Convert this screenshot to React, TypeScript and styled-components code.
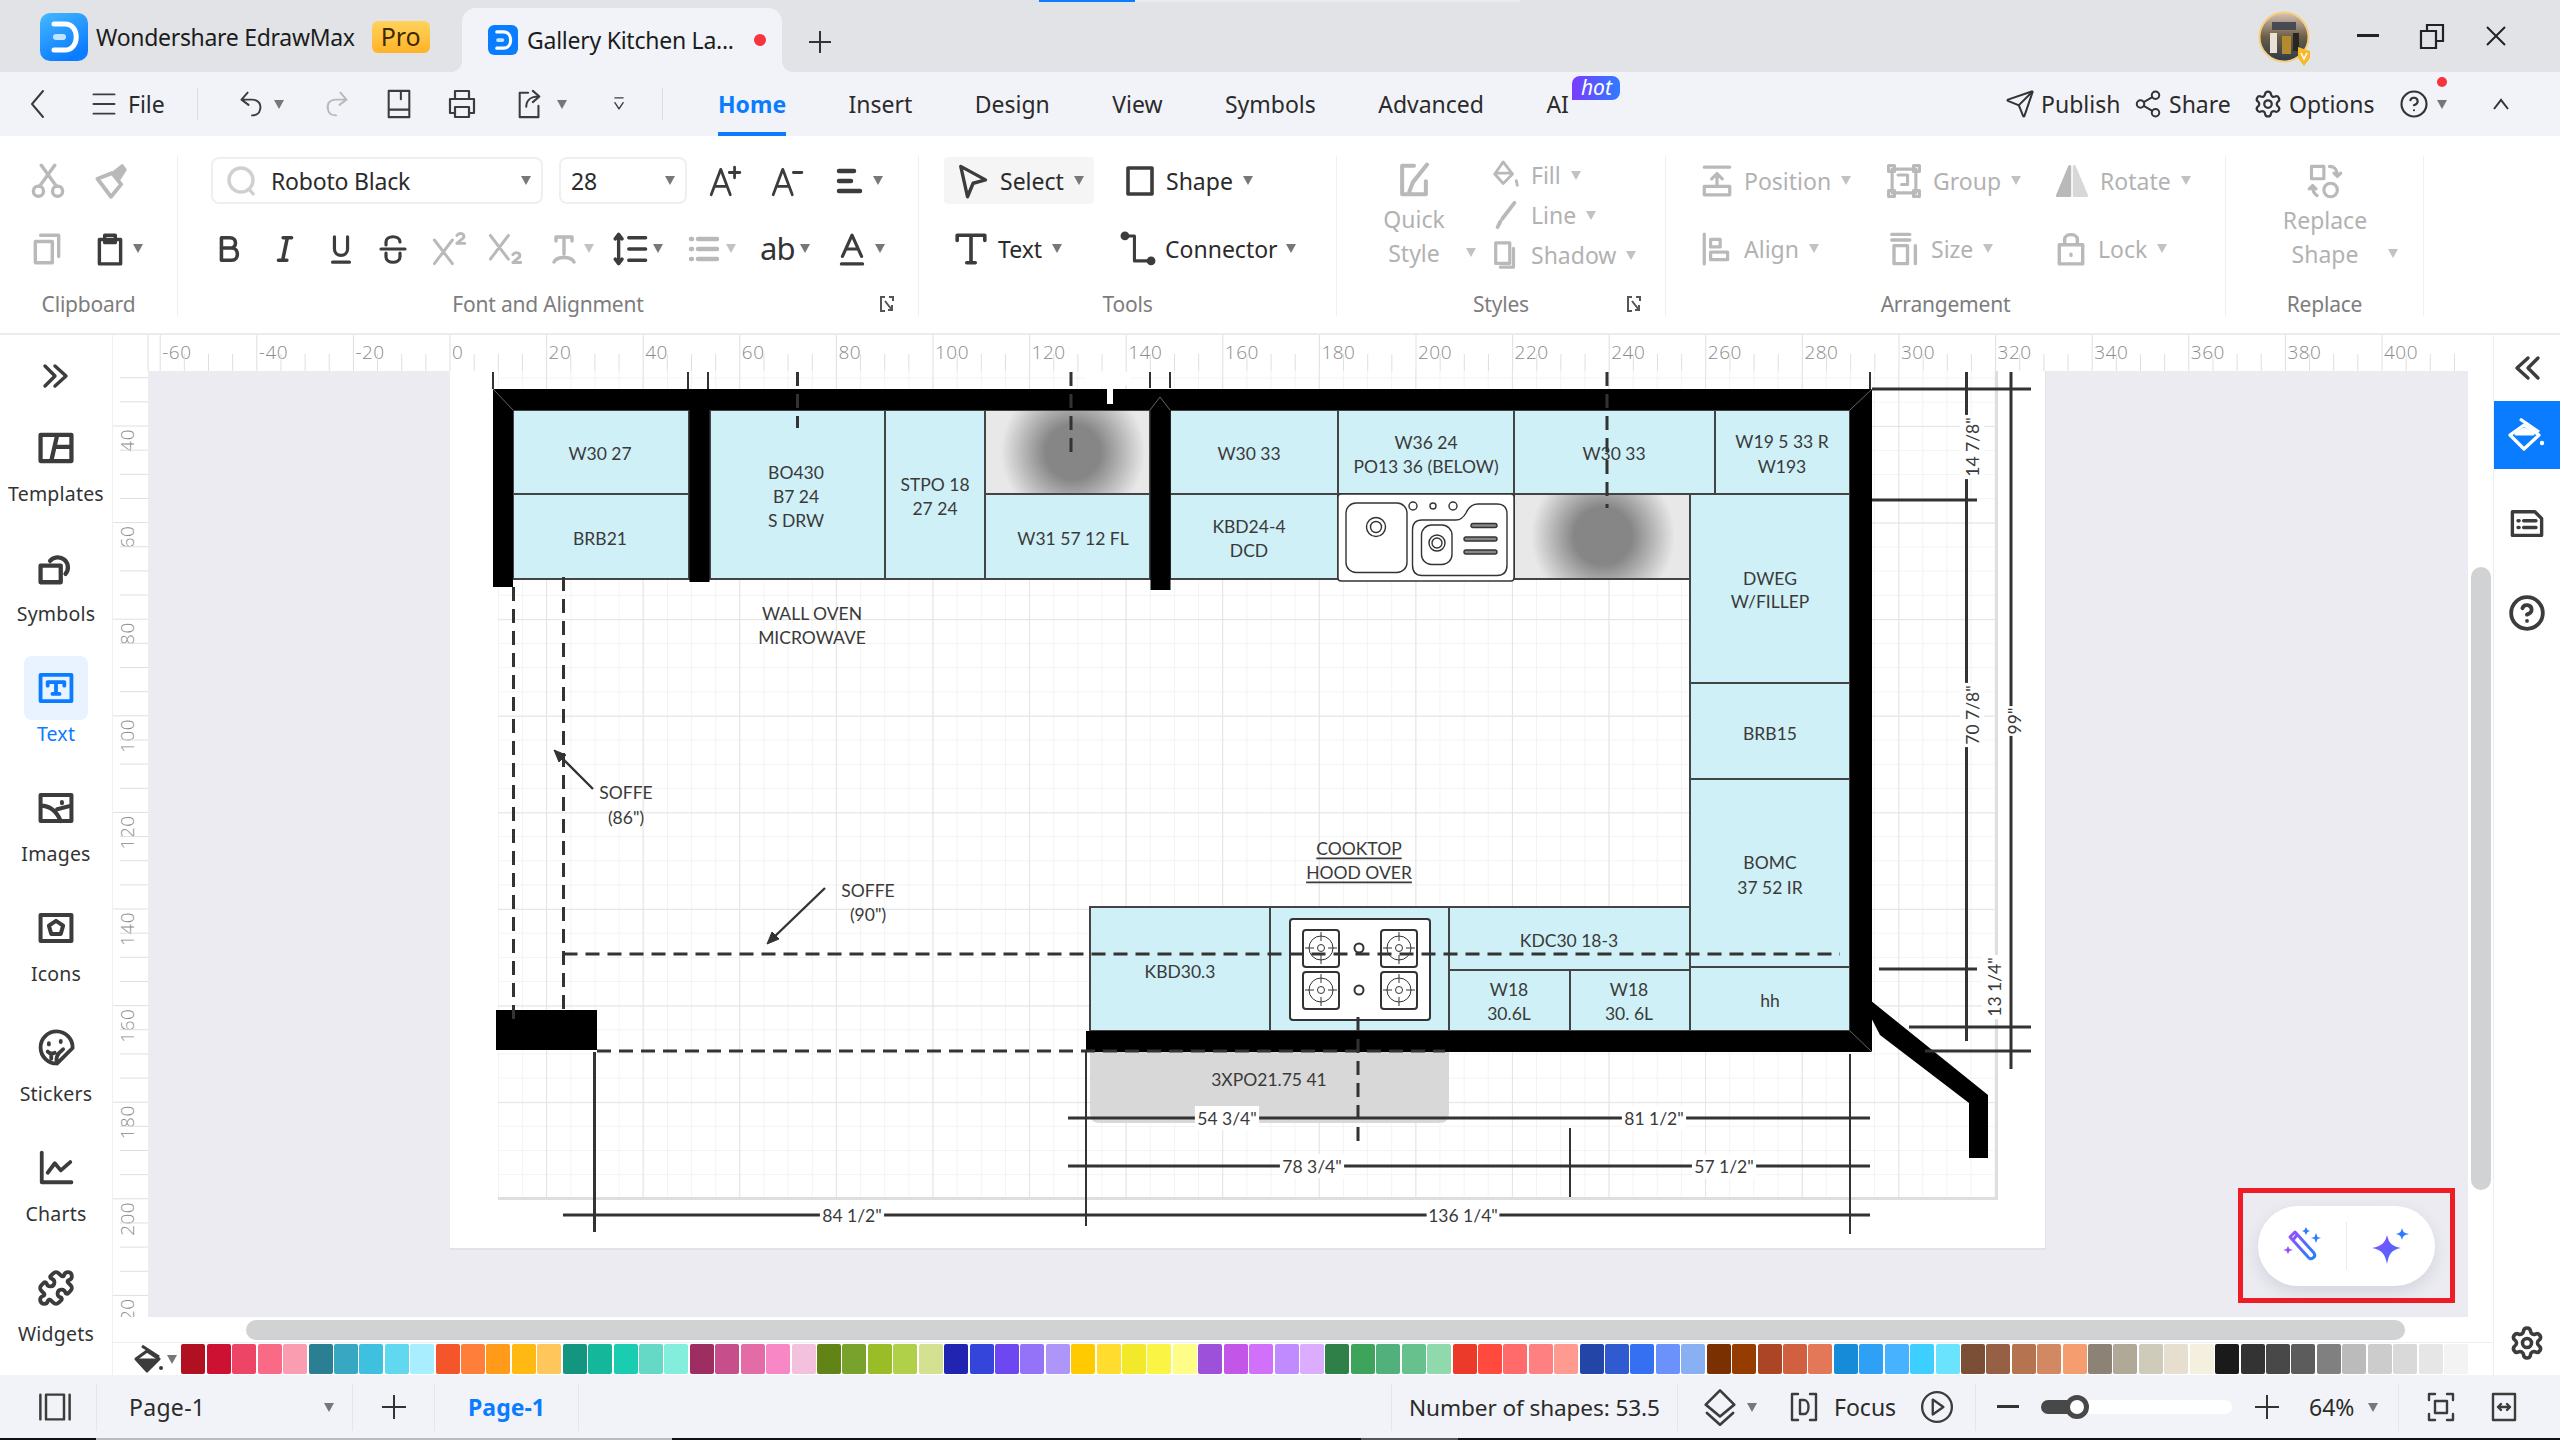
import React from "react";
import styled, { createGlobalStyle } from "styled-components";
import { CircleHelp, Puzzle, Send, Settings, Share2 } from "lucide-react";

const GlobalStyle = createGlobalStyle`
	html, body {
		margin: 0;
		padding: 0;
		background: #f2f3f8;
		overflow: hidden;
	}
	* {
		box-sizing: border-box;
	}
`;

const UI_FONT = `"Noto Sans", "Open Sans", sans-serif`;
const BLUE = "#0a7cff";

const AppFrame = styled.div`
	width: 2560px;
	height: 1440px;
	display: flex;
	flex-direction: column;
	overflow: hidden;
	font-family: ${UI_FONT};
	color: #2b2b2b;
`;

/* ---------- icons ---------- */

const Svg = styled.svg<{ $s: number; $color?: string; $sw?: number }>`
	width: ${(p) => p.$s}px;
	height: ${(p) => p.$s}px;
	flex: none;
	color: ${(p) => p.$color ?? "#3c3c3c"};
	fill: none;
	stroke: currentColor;
	stroke-width: ${(p) => p.$sw ?? 2.6};
	stroke-linecap: round;
	stroke-linejoin: round;
`;

const ICONS: Record<string, React.ReactNode> = {
	back: <path d="M21 3L10 16L21 29" />,
	menu: <path d="M4 5H28M4 16H28M4 27H28" />,
	undo: <path d="M11 3L4 11L12 17M4 11H16C24 11 27 17 25 23C24 27 20 29 16 29" />,
	redo: <path d="M21 3L28 11L20 17M28 11H16C8 11 5 17 7 23C8 27 12 29 16 29" />,
	save: <path d="M5 2H27V30H5ZM5 22H27M18 2V11" />,
	print: <path d="M9 11V3H23V11M9 25H4V11H28V25H23M9 19H23V29H9Z" />,
	shareDoc: <path d="M14 4H5V30H25V18M12 19C12 12 17 8 25 8M19 2L26 8L19 14" />,
	more: <path d="M10 7H22M10 14L16 23L22 14" />,
	aPlus: <path d="M3 29L12 5L21 29M7 21H17M25 3V13M20 8H30" />,
	aMinus: <path d="M3 29L12 5L21 29M7 21H17M22 8H30" />,
	align: <path d="M6 6H21M6 16H18M6 26H27" strokeWidth="4.5" />,
	bold: <path d="M9 4H18C26 4 26 15 18 15H9ZM9 15H20C28 15 28 28 20 28H9Z" strokeWidth="3.8" />,
	italic: <path d="M14 4H23M9 28H18M18.5 4L13.5 28" strokeWidth="3.8" />,
	underline: <path d="M9 3V16C9 25 23 25 23 16V3M7 30H25" strokeWidth="3.4" />,
	strike: <path d="M23 9C23 2 9 2 9 9V12M4 16H28M9 20V24C9 31 23 31 23 24V20" strokeWidth="3.2" />,
	sup: <path d="M3 8L19 29M19 8L3 29M23 4C25 1 30 2 29 6L23 11H30" />,
	sub: <path d="M3 4L19 25M19 4L3 25M23 21C25 18 30 19 29 23L23 28H30" />,
	textFormat: <path d="M8 4H24M8 4V8M24 4V8M16 4V21M6 29C9 23 23 23 26 29" strokeWidth="3.4" />,
	spacing: <path d="M5 3V29M2 7L5 3L8 7M2 25L5 29L8 25M14 6H29M14 16H29M14 26H29" strokeWidth="3" />,
	list: <path d="M3 6H4M10 6H29M3 16H4M10 16H29M3 26H4M10 26H29" strokeWidth="4.5" />,
	fontColor: <path d="M7 23L16 3L25 23M10.5 16H21.5M6 30H26" strokeWidth="3" />,
	cut: <path d="M9 20L22 2M23 20L10 2M12 25A4.5 4.5 0 1 1 3 25A4.5 4.5 0 1 1 12 25ZM29 25A4.5 4.5 0 1 1 20 25A4.5 4.5 0 1 1 29 25Z" strokeWidth="3" />,
	painter: (
		<>
			<path d="M4 14L17 9L25 19L16 30Z" strokeWidth="3.4" />
			<path d="M17 9L26 2L29 6L24 14L19 12Z" fill="currentColor" strokeWidth="2" />
		</>
	),
	copy: <path d="M5 9H21V29H5ZM10 3H27V23" strokeWidth="3.2" />,
	paste: <path d="M6 7H26V30H6ZM11 3H21V10H11Z" strokeWidth="3.2" />,
	select: <path d="M6 3L28 15L17 18L12 30Z" strokeWidth="3" />,
	shape: <path d="M4 3H28V29H4Z" strokeWidth="3.6" />,
	textT: <path d="M3 8V3H29V8M16 3V29M12 29H20" strokeWidth="3.4" />,
	connector: (
		<>
			<path d="M7 5H13V26H25" strokeWidth="2.6" />
			<circle cx="5" cy="5" r="2.4" fill="currentColor" />
			<circle cx="27" cy="26" r="2.4" fill="currentColor" />
		</>
	),
	quickStyle: <path d="M16 4H6V28H26V17M27 3L15 18L12 26" strokeWidth="3.4" />,
	fillPot: <path d="M13 2L23 15L13 25L4 15ZM6 14H21M27 22L28 27" strokeWidth="3" />,
	brush: <path d="M25 3L12 20M10 23L7 29" strokeWidth="4" />,
	shadowBox: <path d="M5 3H20V25H5ZM24 9V29H10" strokeWidth="3.4" />,
	position: <path d="M4 3H28M16 21V9M11 14L16 9L21 14M4 21H28V29H4Z" strokeWidth="3" />,
	group: <path d="M6 6H26V26H6ZM3 3H8V8H3ZM24 3H29V8H24ZM3 24H8V29H3ZM24 24H29V29H24ZM11 11H19V19H14" strokeWidth="2.6" />,
	rotate: (
		<>
			<path d="M14 3L3 29H14Z" fill="currentColor" />
			<path d="M18 3L29 29H18Z" fill="currentColor" opacity="0.55" />
		</>
	),
	alignLeft: <path d="M4 2V30M10 7H19V14H10ZM10 19H26V26H10Z" strokeWidth="3" />,
	sizeBox: <path d="M6 3H22M6 8H22M8 13H20V29H8ZM27 13V29" strokeWidth="3" />,
	lock: <path d="M10 12V7C10 1 22 1 22 7V12M5 12H27V30H5ZM16 21V22" strokeWidth="3.2" />,
	replace: <path d="M4 3H15V14H4ZM27 24A6 6 0 1 1 15 24A6 6 0 1 1 27 24ZM20 3C25 3 27 7 27 11M24 9L27 12L30 9M9 29C6 27 5 24 5 21M2 23L5 20L8 23" strokeWidth="2.8" />,
	pages: <path d="M3 5V27M29 5V27M8 5H24V27H8Z" strokeWidth="2.2" />,
	layers: <path d="M16 2L28 14L16 24L4 14ZM5 21L16 31L27 21" strokeWidth="2.2" />,
	focus: <path d="M10 3H4V29H10M22 3H28V29H22M12 9H16C22 9 22 23 16 23H12Z" strokeWidth="2.4" />,
	play: <path d="M30 16A14 14 0 1 1 2 16A14 14 0 1 1 30 16ZM12 9L22 16L12 23Z" strokeWidth="2.2" />,
	fit: <path d="M10 3H4V9M22 3H28V9M10 29H4V23M22 29H28V23M10 10H22V22H10Z" strokeWidth="2.4" />,
	fitWidth: <path d="M5 3H27V29H5ZM10 16H22M13 13L10 16L13 19M19 13L22 16L19 19" strokeWidth="2.4" />,
	dblRight: <path d="M5 6L15 16L5 26M15 6L26 16L15 26" strokeWidth="3.4" />,
	dblLeft: <path d="M27 6L17 16L27 26M17 6L6 16L17 26" strokeWidth="3.4" />,
	templates: <path d="M3 5H29V27H3ZM17 5L12 27M15 15H29" strokeWidth="3.6" />,
	symbols: <path d="M3 14H20V28H3ZM11 10A8.5 8.5 0 1 1 24 21" strokeWidth="3.6" />,
	textBox: <path d="M3 5H29V27H3ZM9 11H23M9 11V14M23 11V14M16 11V21M13 21H19" strokeWidth="3.2" />,
	images: <path d="M3 5H29V27H3ZM3 14C12 14 17 20 20 27M21 11V12M17 17L29 14" strokeWidth="3.4" />,
	iconsBox: <path d="M3 5H29V27H3ZM16 10L22 14L20 21H12L10 14Z" strokeWidth="3.4" />,
	stickers: <path d="M17 29A13.5 13.5 0 1 1 30 16L17 29ZM17 29C15 24 18 20 22 17M10 12V13M20 10V11M9 19C11 21 13 21 15 20M12 21V25" strokeWidth="3.2" />,
	charts: <path d="M4 3V28H29M9 20L15 12L20 18L28 11" strokeWidth="3.2" />,
	docList: <path d="M3 6H23L29 12V27H3ZM8 14H9M13 14H24M8 20H9M13 20H24" strokeWidth="3" />,
};

interface IconProps {
	name: string;
	size?: number;
	color?: string;
	muted?: boolean;
	sw?: number;
}

function Icon({ name, size = 32, color, muted, sw }: IconProps) {
	return (
		<Svg viewBox="0 0 32 32" $s={size} $sw={sw} $color={muted ? "#b9b9b9" : color}>
			{ICONS[name]}
		</Svg>
	);
}

const Caret = styled.i<{ $muted?: boolean }>`
	display: block;
	flex: none;
	width: 0;
	height: 0;
	border-left: 5px solid transparent;
	border-right: 5px solid transparent;
	border-top: 9px solid ${(p) => (p.$muted ? "#c2c2c2" : "#777")};
`;

const LogoSvg = styled.svg<{ $s: number }>`
	width: ${(p) => p.$s}px;
	height: ${(p) => p.$s}px;
	flex: none;
`;

function EdrawLogo({ size, flat }: { size: number; flat?: boolean }) {
	const id = flat ? "logoFlat" : "logoGrad";
	return (
		<LogoSvg viewBox="0 0 48 48" $s={size}>
			<defs>
				<linearGradient id={id} x1="0" y1="0" x2="0.5" y2="1">
					<stop offset="0" stopColor={flat ? BLUE : "#46b8ff"} />
					<stop offset="1" stopColor={BLUE} />
				</linearGradient>
			</defs>
			<rect width="48" height="48" rx="10" fill={`url(#${id})`} />
			<path
				d="M14 11H25C40 11 40 37 25 37H14"
				fill="none"
				stroke="#fff"
				strokeWidth="5"
				strokeLinecap="round"
			/>
			<rect x="13" y="21" width="13" height="6" rx="3" fill="#bfe4ff" />
		</LogoSvg>
	);
}

/* ---------- title bar ---------- */

const TitleBar = styled.div`
	position: relative;
	height: 72px;
	flex: none;
	display: flex;
	align-items: flex-end;
	background: #e1e3e6;
`;

const LoadBar = styled.div`
	position: absolute;
	top: 0;
	left: 1039px;
	width: 481px;
	height: 2px;
	background: linear-gradient(90deg, ${BLUE} 0 96px, #ececec 96px);
`;

const Brand = styled.div`
	display: flex;
	align-items: center;
	height: 64px;
	width: 462px;
	padding: 0 0 6px 40px;
	gap: 8px;
	font-size: 23px;
	letter-spacing: -0.3px;
	white-space: nowrap;
	color: #1c1c1c;
`;

const ProBadge = styled.span`
	margin-left: 9px;
	width: 58px;
	height: 32px;
	line-height: 30px;
	text-align: center;
	border-radius: 6px;
	font-size: 25px;
	letter-spacing: 0;
	color: #3f2a00;
	background: linear-gradient(180deg, #ffd35c, #ffb326);
`;

const DocTab = styled.div`
	position: relative;
	width: 320px;
	height: 64px;
	display: flex;
	align-items: center;
	padding-left: 26px;
	background: #f2f3f8;
	border-radius: 14px 14px 0 0;
	font-size: 23px;
	letter-spacing: -0.25px;
	color: #1c1c1c;
	&::before,
	&::after {
		content: "";
		position: absolute;
		bottom: 0;
		width: 12px;
		height: 12px;
	}
	&::before {
		left: -12px;
		background: radial-gradient(circle at 0 0, transparent 12px, #f2f3f8 12.5px);
	}
	&::after {
		right: -12px;
		background: radial-gradient(circle at 100% 0, transparent 12px, #f2f3f8 12.5px);
	}
`;

const DocTitle = styled.span`
	margin-left: 9px;
	width: 227px;
	white-space: nowrap;
`;

const RedDot = styled.span`
	width: 12px;
	height: 12px;
	border-radius: 50%;
	background: #f7333d;
`;

const NewTab = styled.div`
	display: flex;
	align-items: center;
	margin: 0 0 16px 24px;
`;

const WindowControls = styled.div`
	margin-left: auto;
	height: 72px;
	display: flex;
	align-items: center;
	padding-right: 33px;
`;

const Avatar = styled.div`
	width: 60px;
	height: 60px;
	margin-right: 19px;
`;

const WinGlyph = styled.div<{ $w: number }>`
	width: ${(p) => p.$w}px;
	display: flex;
	justify-content: center;
`;

function TopBar() {
	return (
		<TitleBar>
			<LoadBar />
			<Brand>
				<EdrawLogo size={48} />
				<span>Wondershare EdrawMax</span>
				<ProBadge>Pro</ProBadge>
			</Brand>
			<DocTab>
				<EdrawLogo size={30} flat />
				<DocTitle>Gallery Kitchen La...</DocTitle>
				<RedDot />
			</DocTab>
			<NewTab>
				<svg width="28" height="28" viewBox="0 0 28 28" stroke="#333" strokeWidth="2">
					<path d="M14 3V25M3 14H25" />
				</svg>
			</NewTab>
			<WindowControls>
				<Avatar>
					<svg width="60" height="60" viewBox="0 0 60 60">
						<defs>
							<linearGradient id="photo" x1="0" y1="0" x2="0" y2="1">
								<stop offset="0" stopColor="#d8c3b4" />
								<stop offset="0.5" stopColor="#6b5d48" />
								<stop offset="1" stopColor="#2c3a48" />
							</linearGradient>
						</defs>
						<circle cx="26" cy="31" r="24.5" fill="url(#photo)" stroke="#f5cf7d" strokeWidth="2" />
						<rect x="14" y="16" width="24" height="8" fill="#4a4a52" />
						<rect x="12" y="27" width="7" height="20" fill="#e8e2d4" />
						<rect x="24" y="30" width="9" height="18" fill="#b48a2e" />
						<rect x="35" y="27" width="6" height="18" fill="#28261f" />
						<path d="M40 41L52 45V52L46 60L40 52Z" fill="#f9b72a" />
						<path d="M43 47L46 53L49 47" fill="none" stroke="#fff" strokeWidth="1.6" />
					</svg>
				</Avatar>
				<WinGlyph $w={62}>
					<svg width="22" height="4" viewBox="0 0 22 4">
						<rect width="22" height="3" fill="#222" />
					</svg>
				</WinGlyph>
				<WinGlyph $w={66}>
					<svg width="26" height="26" viewBox="0 0 26 26" fill="none" stroke="#222" strokeWidth="2.2">
						<path d="M2 8H17V25H2ZM8 8V2H24V18H17" />
					</svg>
				</WinGlyph>
				<WinGlyph $w={62}>
					<svg width="22" height="22" viewBox="0 0 22 22" stroke="#222" strokeWidth="2">
						<path d="M2 2L20 20M20 2L2 20" />
					</svg>
				</WinGlyph>
			</WindowControls>
		</TitleBar>
	);
}

/* ---------- nav row ---------- */

const NavBar = styled.div`
	height: 64px;
	flex: none;
	display: flex;
	align-items: center;
	background: #f2f3f8;
	font-size: 23px;
`;

const NavSlot = styled.div<{ $w: number; $gap?: number; $pl?: number }>`
	width: ${(p) => p.$w}px;
	flex: none;
	display: flex;
	align-items: center;
	gap: ${(p) => p.$gap ?? 0}px;
	padding-left: ${(p) => p.$pl ?? 0}px;
`;

const NavDivider = styled.span`
	flex: none;
	width: 1px;
	height: 32px;
	background: #dcdde2;
`;

const NavTabs = styled.div`
	display: flex;
	height: 64px;
	margin-left: 55px;
	gap: 62.4px;
`;

const NavTab = styled.div<{ $active?: boolean }>`
	position: relative;
	line-height: 64px;
	white-space: nowrap;
	font-weight: ${(p) => (p.$active ? 700 : 400)};
	color: ${(p) => (p.$active ? BLUE : "#2b2b2b")};
	&::after {
		content: "";
		display: ${(p) => (p.$active ? "block" : "none")};
		position: absolute;
		left: 0;
		right: 0;
		bottom: 0;
		height: 4px;
		background: ${BLUE};
	}
`;

const HotBadge = styled.span`
	position: absolute;
	left: 26px;
	top: 4px;
	width: 48px;
	height: 24px;
	line-height: 22px;
	text-align: center;
	border-radius: 8px 8px 8px 0;
	font-size: 21px;
	font-weight: 400;
	font-style: italic;
	color: #fff;
	background: linear-gradient(90deg, #7a3cff, #2f7bff);
`;

const NavActions = styled.div`
	margin-left: auto;
	display: flex;
	align-items: center;
	padding-right: 50px;
`;

const NavAction = styled.div<{ $w: number }>`
	width: ${(p) => p.$w}px;
	display: flex;
	align-items: center;
	gap: 6px;
	white-space: nowrap;
`;

const NotifyDot = styled.span`
	position: absolute;
	left: 38px;
	top: -12px;
	width: 10px;
	height: 10px;
	border-radius: 50%;
	background: #f7333d;
`;

const HelpWrap = styled.div`
	position: relative;
	width: 93px;
	display: flex;
	align-items: center;
	gap: 8px;
`;

function NavRow() {
	return (
		<NavBar>
			<NavSlot $w={90} $pl={22}>
				<Icon name="back" size={32} sw={2} />
			</NavSlot>
			<NavSlot $w={107} $gap={10}>
				<Icon name="menu" size={28} sw={2.2} />
				<span>File</span>
			</NavSlot>
			<NavDivider />
			<NavSlot $w={40} />
			<NavSlot $w={84} $gap={8}>
				<Icon name="undo" size={28} sw={2.2} />
				<Caret />
			</NavSlot>
			<NavSlot $w={62}>
				<Icon name="redo" size={28} muted sw={2.2} />
			</NavSlot>
			<NavSlot $w={62}>
				<Icon name="save" size={30} sw={2.2} />
			</NavSlot>
			<NavSlot $w={69}>
				<Icon name="print" size={32} sw={2.2} />
			</NavSlot>
			<NavSlot $w={93} $gap={12}>
				<Icon name="shareDoc" size={30} sw={2.2} />
				<Caret />
			</NavSlot>
			<NavSlot $w={54}>
				<Icon name="more" size={22} sw={2} />
			</NavSlot>
			<NavDivider />
			<NavTabs>
				<NavTab $active>Home</NavTab>
				<NavTab>Insert</NavTab>
				<NavTab>Design</NavTab>
				<NavTab>View</NavTab>
				<NavTab>Symbols</NavTab>
				<NavTab>Advanced</NavTab>
				<NavTab>
					AI
					<HotBadge>hot</HotBadge>
				</NavTab>
			</NavTabs>
			<NavActions>
				<NavAction $w={128}>
					<Send size={30} strokeWidth={1.6} color="#333" />
					<span>Publish</span>
				</NavAction>
				<NavAction $w={120}>
					<Share2 size={30} strokeWidth={1.6} color="#333" />
					<span>Share</span>
				</NavAction>
				<NavAction $w={146}>
					<Settings size={30} strokeWidth={1.8} color="#333" />
					<span>Options</span>
				</NavAction>
				<HelpWrap>
					<CircleHelp size={30} strokeWidth={1.7} color="#333" />
					<Caret />
					<NotifyDot />
				</HelpWrap>
				<svg width="18" height="12" viewBox="0 0 18 12" fill="none" stroke="#333" strokeWidth="2">
					<path d="M2 11L9 2L16 11" />
				</svg>
			</NavActions>
		</NavBar>
	);
}

/* ---------- ribbon ---------- */

const RibbonBar = styled.div`
	height: 199px;
	flex: none;
	display: flex;
	align-items: flex-start;
	background: #fff;
	border-bottom: 2px solid #ececec;
	font-size: 23px;
`;

const Group = styled.div<{ $w: number }>`
	width: ${(p) => p.$w}px;
	height: 160px;
	margin-top: 20px;
	flex: none;
	display: flex;
	flex-direction: column;
	border-right: 1px solid #efefef;
`;

const GroupBody = styled.div`
	height: 135px;
	padding-top: 1px;
`;

const GroupLabel = styled.div`
	height: 25px;
	line-height: 26px;
	display: grid;
	grid-template-columns: 1fr auto 1fr;
	font-size: 21px;
	letter-spacing: -0.2px;
	color: #7d7d7d;
`;

const LabelText = styled.span`
	grid-column: 2;
`;

const Expander = styled.span`
	grid-column: 3;
	justify-self: end;
	align-self: center;
	display: flex;
	margin-right: 24px;
`;

const Row = styled.div<{ $pl?: number; $mt?: number }>`
	height: 47px;
	display: flex;
	align-items: center;
	padding-left: ${(p) => p.$pl ?? 0}px;
	margin-top: ${(p) => p.$mt ?? 0}px;
`;

const Slot = styled.div<{ $w: number; $gap?: number; $muted?: boolean }>`
	width: ${(p) => p.$w}px;
	flex: none;
	display: flex;
	align-items: center;
	gap: ${(p) => p.$gap ?? 10}px;
	white-space: nowrap;
	color: ${(p) => (p.$muted ? "#b2b2b2" : "#2b2b2b")};
`;

const SelectBox = styled.div<{ $w: number; $pl: number }>`
	width: ${(p) => p.$w}px;
	height: 47px;
	flex: none;
	display: flex;
	align-items: center;
	padding: 0 10px 0 ${(p) => p.$pl}px;
	border: 2px solid #efefef;
	border-radius: 8px;
	font-size: 23px;
	letter-spacing: -0.2px;
`;

const SelectValue = styled.span<{ $ml?: number }>`
	flex: 1;
	margin-left: ${(p) => p.$ml ?? 0}px;
`;

const ActiveTool = styled.div`
	width: 150px;
	height: 47px;
	flex: none;
	display: flex;
	align-items: center;
	gap: 10px;
	padding-left: 10px;
	background: #f5f5f5;
	border-radius: 4px;
`;

const AbGlyph = styled.span`
	font-size: 31px;
	line-height: 1;
	font-weight: 400;
	letter-spacing: -1px;
	color: #333;
`;

const StackedTool = styled.div<{ $w: number }>`
	width: ${(p) => p.$w}px;
	flex: none;
	display: flex;
	flex-direction: column;
	align-items: center;
	line-height: 34px;
	color: #b2b2b2;
`;

const StackIcon = styled.div`
	height: 48px;
	margin-bottom: -2px;
	display: flex;
	align-items: center;
`;

const StackLine = styled.div`
	position: relative;
	display: flex;
	align-items: center;
`;

const StackCaret = styled.span<{ $left: number }>`
	position: absolute;
	left: ${(p) => p.$left}px;
	top: 12px;
`;

const StylesBody = styled.div`
	display: flex;
	height: 135px;
`;

const StyleColumn = styled.div`
	display: flex;
	flex-direction: column;
	gap: 8px;
	padding-top: 3px;
`;

const StyleRow = styled.div`
	height: 32px;
	display: flex;
	align-items: center;
	gap: 10px;
	color: #b2b2b2;
	white-space: nowrap;
`;

function GroupFoot({ label, expander }: { label: string; expander?: boolean }) {
	return (
		<GroupLabel>
			<LabelText>{label}</LabelText>
			{expander && (
				<Expander>
					<svg width="14" height="16" viewBox="0 0 14 16" fill="none" stroke="#555" strokeWidth="2">
						<path d="M5 1H1V15H5M9 1H13V5M5 5L12 14M12 9V14H8" />
					</svg>
				</Expander>
			)}
		</GroupLabel>
	);
}

function Ribbon() {
	return (
		<RibbonBar>
			<Group $w={178}>
				<GroupBody>
					<Row $pl={30}>
						<Slot $w={63}>
							<Icon name="cut" size={36} muted />
						</Slot>
						<Icon name="painter" size={36} muted />
					</Row>
					<Row $pl={30} $mt={21}>
						<Slot $w={63}>
							<Icon name="copy" size={34} muted />
						</Slot>
						<Slot $w={60} $gap={6}>
							<Icon name="paste" size={34} />
							<Caret />
						</Slot>
					</Row>
				</GroupBody>
				<GroupFoot label="Clipboard" />
			</Group>
			<Group $w={741}>
				<GroupBody>
					<Row $pl={33}>
						<SelectBox $w={332} $pl={12}>
							<svg width="34" height="34" viewBox="0 0 34 34" fill="none" stroke="#d0d0d0" strokeWidth="3.4">
								<circle cx="16" cy="16" r="12" />
								<path d="M24 25L29 31" />
							</svg>
							<SelectValue $ml={12}>Roboto Black</SelectValue>
							<Caret />
						</SelectBox>
						<Slot $w={16} />
						<SelectBox $w={128} $pl={10}>
							<SelectValue>28</SelectValue>
							<Caret />
						</SelectBox>
						<Slot $w={21} />
						<Slot $w={62}>
							<Icon name="aPlus" size={34} />
						</Slot>
						<Slot $w={63}>
							<Icon name="aMinus" size={34} />
						</Slot>
						<Slot $w={60} $gap={8}>
							<Icon name="align" size={32} />
							<Caret />
						</Slot>
					</Row>
					<Row $pl={35} $mt={21}>
						<Slot $w={57}>
							<Icon name="bold" size={30} />
						</Slot>
						<Slot $w={56}>
							<Icon name="italic" size={30} />
						</Slot>
						<Slot $w={51}>
							<Icon name="underline" size={30} />
						</Slot>
						<Slot $w={54}>
							<Icon name="strike" size={32} />
						</Slot>
						<Slot $w={56}>
							<Icon name="sup" size={36} muted />
						</Slot>
						<Slot $w={61}>
							<Icon name="sub" size={36} muted />
						</Slot>
						<Slot $w={65} $gap={4}>
							<Icon name="textFormat" size={32} muted />
							<Caret $muted />
						</Slot>
						<Slot $w={75} $gap={4}>
							<Icon name="spacing" size={36} />
							<Caret />
						</Slot>
						<Slot $w={72} $gap={6}>
							<Icon name="list" size={32} muted />
							<Caret $muted />
						</Slot>
						<Slot $w={75} $gap={6}>
							<AbGlyph>ab</AbGlyph>
							<Caret />
						</Slot>
						<Slot $w={60} $gap={6}>
							<Icon name="fontColor" size={34} />
							<Caret />
						</Slot>
					</Row>
				</GroupBody>
				<GroupFoot label="Font and Alignment" expander />
			</Group>
			<Group $w={418}>
				<GroupBody>
					<Row $pl={25}>
						<ActiveTool>
							<Icon name="select" size={36} />
							<span>Select</span>
							<Caret />
						</ActiveTool>
						<Slot $w={30} />
						<Slot $w={160}>
							<Icon name="shape" size={32} />
							<span>Shape</span>
							<Caret />
						</Slot>
					</Row>
					<Row $pl={35} $mt={21}>
						<Slot $w={165}>
							<Icon name="textT" size={34} />
							<span>Text</span>
							<Caret />
						</Slot>
						<Slot $w={200} $gap={8}>
							<Icon name="connector" size={38} />
							<span>Connector</span>
							<Caret />
						</Slot>
					</Row>
				</GroupBody>
				<GroupFoot label="Tools" />
			</Group>
			<Group $w={329}>
				<StylesBody>
					<StackedTool $w={154}>
						<StackIcon>
							<Icon name="quickStyle" size={38} muted />
						</StackIcon>
						<span>Quick</span>
						<StackLine>
							Style
							<StackCaret $left={78}>
								<Caret $muted />
							</StackCaret>
						</StackLine>
					</StackedTool>
					<StyleColumn>
						<StyleRow>
							<Icon name="fillPot" size={30} muted />
							<span>Fill</span>
							<Caret $muted />
						</StyleRow>
						<StyleRow>
							<Icon name="brush" size={30} muted />
							<span>Line</span>
							<Caret $muted />
						</StyleRow>
						<StyleRow>
							<Icon name="shadowBox" size={30} muted />
							<span>Shadow</span>
							<Caret $muted />
						</StyleRow>
					</StyleColumn>
				</StylesBody>
				<GroupFoot label="Styles" expander />
			</Group>
			<Group $w={560}>
				<GroupBody>
					<Row $pl={34}>
						<Slot $w={185} $muted>
							<Icon name="position" size={34} muted />
							<span>Position</span>
							<Caret $muted />
						</Slot>
						<Slot $w={169} $muted>
							<Icon name="group" size={38} muted sw={2.4} />
							<span>Group</span>
							<Caret $muted />
						</Slot>
						<Slot $w={160} $muted>
							<Icon name="rotate" size={36} muted />
							<span>Rotate</span>
							<Caret $muted />
						</Slot>
					</Row>
					<Row $pl={34} $mt={21}>
						<Slot $w={185} $muted>
							<Icon name="alignLeft" size={34} muted />
							<span>Align</span>
							<Caret $muted />
						</Slot>
						<Slot $w={169} $muted>
							<Icon name="sizeBox" size={36} muted />
							<span>Size</span>
							<Caret $muted />
						</Slot>
						<Slot $w={160} $muted>
							<Icon name="lock" size={34} muted />
							<span>Lock</span>
							<Caret $muted />
						</Slot>
					</Row>
				</GroupBody>
				<GroupFoot label="Arrangement" />
			</Group>
			<Group $w={198}>
				<GroupBody>
					<StackedTool $w={198}>
						<StackIcon>
							<Icon name="replace" size={36} muted />
						</StackIcon>
						<span>Replace</span>
						<StackLine>
							Shape
							<StackCaret $left={96}>
								<Caret $muted />
							</StackCaret>
						</StackLine>
					</StackedTool>
				</GroupBody>
				<GroupFoot label="Replace" />
			</Group>
		</RibbonBar>
	);
}

/* ---------- side panels ---------- */

const MainArea = styled.div`
	height: 1040px;
	flex: none;
	display: flex;
`;

const LeftPanel = styled.div`
	width: 113px;
	flex: none;
	background: #fff;
	border-right: 1px solid #f0f0f0;
`;

const CollapseRow = styled.div`
	height: 81px;
	display: flex;
	justify-content: center;
	align-items: center;
`;

const PanelItem = styled.div<{ $active?: boolean }>`
	height: 120px;
	display: flex;
	flex-direction: column;
	align-items: center;
	font-size: 19.5px;
	letter-spacing: 0.2px;
	color: ${(p) => (p.$active ? BLUE : "#333")};
`;

const PanelIcon = styled.div<{ $active?: boolean }>`
	width: 64px;
	height: 64px;
	display: flex;
	align-items: center;
	justify-content: center;
	border-radius: 8px;
	background: ${(p) => (p.$active ? "#e9f3ff" : "transparent")};
`;

const PanelLabel = styled.div`
	line-height: 28px;
`;

const RightPanel = styled.div`
	width: 67px;
	flex: none;
	display: flex;
	flex-direction: column;
	padding-bottom: 5px;
	background: #fff;
	border-left: 1px solid #eeeeee;
`;

const RightItem = styled.div<{ $h: number; $active?: boolean; $push?: boolean }>`
	height: ${(p) => p.$h}px;
	flex: none;
	display: flex;
	align-items: center;
	justify-content: center;
	margin-top: ${(p) => (p.$push ? "auto" : 0)};
	background: ${(p) => (p.$active ? BLUE : "transparent")};
`;

const SIDE_ITEMS: [string, string][] = [
	["templates", "Templates"],
	["symbols", "Symbols"],
	["textBox", "Text"],
	["images", "Images"],
	["iconsBox", "Icons"],
	["stickers", "Stickers"],
	["charts", "Charts"],
];

function LeftSidebar() {
	return (
		<LeftPanel>
			<CollapseRow>
				<Icon name="dblRight" size={32} />
			</CollapseRow>
			{SIDE_ITEMS.map(([icon, label]) => {
				const active = label === "Text";
				return (
					<PanelItem key={label} $active={active}>
						<PanelIcon $active={active}>
							<Icon name={icon} size={38} color={active ? BLUE : "#3c3c3c"} />
						</PanelIcon>
						<PanelLabel>{label}</PanelLabel>
					</PanelItem>
				);
			})}
			<PanelItem>
				<PanelIcon>
					<Puzzle size={38} strokeWidth={2.4} color="#3c3c3c" />
				</PanelIcon>
				<PanelLabel>Widgets</PanelLabel>
			</PanelItem>
		</LeftPanel>
	);
}

function RightSidebar() {
	return (
		<RightPanel>
			<RightItem $h={66}>
				<Icon name="dblLeft" size={32} />
			</RightItem>
			<RightItem $h={68} $active>
				<svg width="38" height="38" viewBox="0 0 38 38" fill="none" stroke="#fff" strokeWidth="3.2" strokeLinejoin="round">
					<path d="M2 19L16 9L31 19L16 33Z" />
					<path d="M8 18L16 13L25 18Z" fill="#fff" />
					<path d="M12 3L31 16" />
					<circle cx="34" cy="27" r="2.2" fill="#fff" stroke="none" />
				</svg>
			</RightItem>
			<RightItem $h={108}>
				<Icon name="docList" size={36} />
			</RightItem>
			<RightItem $h={72}>
				<CircleHelp size={38} strokeWidth={2.4} color="#3c3c3c" />
			</RightItem>
			<RightItem $h={54} $push>
				<Settings size={36} strokeWidth={2.4} color="#3c3c3c" />
			</RightItem>
		</RightPanel>
	);
}

/* ---------- rulers ---------- */

const ORIGIN_X = 450;
const ORIGIN_Y = 426 - 40 * 4.83;
const UNIT = 4.83;

const Workspace = styled.div`
	flex: 1;
	min-width: 0;
	display: flex;
	flex-direction: column;
`;

const RulerSvg = styled.svg<{ $w: number; $h: number }>`
	display: block;
	flex: none;
	width: ${(p) => p.$w}px;
	height: ${(p) => p.$h}px;
	background: #fff;
	line {
		stroke: #dfdfdf;
		stroke-width: 1;
	}
	text {
		font-family: "Open Sans", sans-serif;
		font-weight: 300;
		font-size: 19px;
		letter-spacing: 0.5px;
		fill: #8c8c8c;
	}
`;

const rulerValues = Array.from({ length: 101 }, (_, i) => -60 + i * 5);

function TopRuler() {
	return (
		<RulerSvg viewBox="113 335 2380 36" $w={2380} $h={36}>
			<line x1="148" y1="335" x2="148" y2="371" />
			{rulerValues
				.filter((v) => ORIGIN_X + v * UNIT < 2468)
				.map((v) => {
					const x = ORIGIN_X + v * UNIT;
					return v % 20 === 0 ? (
						<g key={v}>
							<line x1={x} y1="335" x2={x} y2="371" />
							<text x={x + 2} y="359">
								{v}
							</text>
						</g>
					) : (
						<line key={v} x1={x} y1="354" x2={x} y2="371" />
					);
				})}
		</RulerSvg>
	);
}

function LeftRuler() {
	const values = Array.from({ length: 40 }, (_, i) => 30 + i * 5);
	return (
		<RulerSvg viewBox="113 371 35 946" $w={35} $h={946}>
			{values.map((v) => {
				const y = ORIGIN_Y + v * UNIT;
				return v % 20 === 0 ? (
					<g key={v}>
						<line x1="113" y1={y} x2="148" y2={y} />
						<text transform={`translate(134 ${y + 3}) rotate(-90)`} textAnchor="end">
							{v}
						</text>
					</g>
				) : (
					<line key={v} x1="120" y1={y} x2="148" y2={y} />
				);
			})}
		</RulerSvg>
	);
}

/* ---------- floor plan ---------- */

const CanvasRow = styled.div`
	height: 946px;
	flex: none;
	display: flex;
`;

const Canvas = styled.div`
	position: relative;
	width: 2320px;
	height: 946px;
	flex: none;
	overflow: hidden;
	background: #ebebf1;
`;

const PageSheet = styled.div`
	position: relative;
	width: 1596px;
	height: 879px;
	margin-left: 302px;
	background: #fff;
	border-right: 1px solid #e2e2e6;
	border-bottom: 2px solid #e2e2e6;
`;

const GridPaper = styled.div`
	width: 1500px;
	height: 829px;
	margin-left: 48px;
	border-right: 3px solid #dedede;
	border-bottom: 3px solid #dedede;
	background-color: #fff;
	background-image: linear-gradient(90deg, #e4e4e4 1px, transparent 1px),
		linear-gradient(180deg, #e4e4e4 1px, transparent 1px),
		linear-gradient(90deg, #f3f3f3 1px, transparent 1px),
		linear-gradient(180deg, #f3f3f3 1px, transparent 1px);
	background-size: 96.6px 96.6px, 96.6px 96.6px, 24.15px 24.15px, 24.15px 24.15px;
	background-position: 48px 55px, 48px 55px, 0 6.5px, 0 6.5px;
`;

const PlanSvg = styled.svg`
	position: absolute;
	left: 0;
	top: 0;
	width: 1596px;
	height: 879px;
	text {
		font-family: Lato, "Open Sans", sans-serif;
		font-size: 17.5px;
		fill: #3a3a3a;
		text-anchor: middle;
		dominant-baseline: central;
	}
`;

const CABINETS: [number, number, number, number][] = [
	[513, 410, 176, 84],
	[513, 494, 176, 85],
	[710, 410, 175, 169],
	[885, 410, 100, 169],
	[985, 494, 165, 85],
	[1170, 410, 168, 84],
	[1170, 494, 168, 85],
	[1338, 410, 176, 84],
	[1514, 410, 201, 84],
	[1715, 410, 135, 84],
	[1690, 494, 160, 189],
	[1690, 683, 160, 96],
	[1690, 779, 160, 188],
	[1690, 967, 160, 64],
	[1449, 907, 241, 63],
	[1449, 970, 121, 61],
	[1570, 970, 120, 61],
	[1270, 907, 179, 124],
	[1090, 907, 180, 124],
];

const CABINET_TEXT: [number, number, string][] = [
	[600, 453, "W30 27"],
	[600, 538, "BRB21"],
	[796, 472, "BO430"],
	[796, 496, "B7 24"],
	[796, 520, "S DRW"],
	[935, 484, "STPO 18"],
	[935, 508, "27 24"],
	[1073, 538, "W31 57 12 FL"],
	[1249, 453, "W30 33"],
	[1249, 526, "KBD24-4"],
	[1249, 550, "DCD"],
	[1426, 442, "W36 24"],
	[1426, 466, "PO13 36 (BELOW)"],
	[1614, 453, "W30 33"],
	[1782, 441, "W19 5 33 R"],
	[1782, 466, "W193"],
	[1770, 578, "DWEG"],
	[1770, 601, "W/FILLEP"],
	[1770, 733, "BRB15"],
	[1770, 862, "BOMC"],
	[1770, 887, "37 52 IR"],
	[1770, 1000, "hh"],
	[1569, 940, "KDC30 18-3"],
	[1509, 989, "W18"],
	[1509, 1013, "30.6L"],
	[1629, 989, "W18"],
	[1629, 1013, "30. 6L"],
	[1180, 971, "KBD30.3"],
	[1269, 1079, "3XPO21.75 41"],
	[812, 613, "WALL OVEN"],
	[812, 637, "MICROWAVE"],
	[626, 792, "SOFFE"],
	[626, 817, '(86")'],
	[868, 890, "SOFFE"],
	[868, 914, '(90")'],
];

const SOLID_LINES: [number, number, number, number, number?][] = [
	[1068, 1118, 1870, 1118],
	[1068, 1166, 1870, 1166],
	[563, 1215, 1870, 1215],
	[594.5, 1052, 594.5, 1232],
	[1086, 1052, 1086, 1226, 2],
	[1850, 1054, 1850, 1234, 2],
	[1570, 1128, 1570, 1197, 2],
	[1966.5, 372, 1966.5, 1041],
	[2011, 372, 2011, 1069],
	[1872, 389, 2031, 389],
	[1872, 500, 1977, 500],
	[1879, 969, 1977, 969],
	[1909, 1027, 2031, 1027],
	[1925, 1051, 2031, 1051],
	[493, 372, 493, 389, 2],
	[688, 372, 688, 389, 2],
	[708, 372, 708, 389, 2],
	[1150, 372, 1150, 388, 2],
	[1170, 372, 1170, 388, 2],
	[1870, 372, 1870, 389, 2],
];

const DASHED_LINES: [number, number, number, number][] = [
	[513.5, 587, 513.5, 1022],
	[563.5, 577, 563.5, 1010],
	[563.5, 954, 1840, 954],
	[597, 1051, 1445, 1051],
	[1358, 1017, 1358, 1148],
	[797.5, 372, 797.5, 428],
	[1071, 372, 1071, 452],
	[1607, 372, 1607, 508],
];

const DIM_LABELS: [number, number, string, boolean?][] = [
	[1227, 1118, '54 3/4"'],
	[1654, 1118, '81 1/2"'],
	[1312, 1166, '78 3/4"'],
	[1724, 1166, '57 1/2"'],
	[852, 1215, '84 1/2"'],
	[1463, 1215, '136 1/4"'],
	[1972, 447, '14 7/8"', true],
	[1972, 715, '70 7/8"', true],
	[2014, 721, '99"', true],
	[1994, 987, '13 1/4"', true],
];

function DimLabel({ x, y, text, vertical }: { x: number; y: number; text: string; vertical?: boolean }) {
	const w = text.length * 8.6 + 4;
	return (
		<g transform={vertical ? `translate(${x} ${y}) rotate(-90)` : `translate(${x} ${y})`}>
			<rect x={-w / 2} y="-12" width={w} height="24" fill="#fff" />
			<text x="0" y="0">
				{text}
			</text>
		</g>
	);
}

function Burner({ cx, cy }: { cx: number; cy: number }) {
	return (
		<g fill="none" stroke="#333">
			<rect x={cx - 18} y={cy - 18} width="36" height="37" rx="3" strokeWidth="2" />
			<circle cx={cx} cy={cy} r="12" strokeWidth="1" />
			<circle cx={cx} cy={cy} r="3.5" strokeWidth="1" />
			<path d={`M${cx} ${cy - 16}V${cy - 7}M${cx} ${cy + 7}V${cy + 16}M${cx - 16} ${cy}H${cx - 7}M${cx + 7} ${cy}H${cx + 16}`} strokeWidth="1" />
		</g>
	);
}

function FloorPlan() {
	return (
		<PlanSvg viewBox="450 371 1596 879">
			<defs>
				<radialGradient id="sinkA" gradientUnits="userSpaceOnUse" cx="1073" cy="452" r="72">
					<stop offset="0.38" stopColor="#868686" />
					<stop offset="1" stopColor="#e8e8e8" />
				</radialGradient>
				<radialGradient id="sinkB" gradientUnits="userSpaceOnUse" cx="1603" cy="536" r="72">
					<stop offset="0.4" stopColor="#868686" />
					<stop offset="1" stopColor="#e8e8e8" />
				</radialGradient>
			</defs>

			<path d="M1090 1052H1449V1113Q1449 1123 1439 1123H1100Q1090 1123 1090 1113Z" fill="#d8d8d8" />

			{CABINETS.map(([x, y, w, h]) => (
				<rect key={`${x}-${y}`} x={x} y={y} width={w} height={h} fill="#cff0f6" stroke="#444" strokeWidth="2" />
			))}
			<rect x="985" y="410" width="165" height="84" fill="url(#sinkA)" stroke="#444" strokeWidth="2" />
			<rect x="1514" y="494" width="176" height="85" fill="url(#sinkB)" stroke="#444" strokeWidth="2" />

			<g fill="#fff" stroke="#333" strokeWidth="1.4">
				<rect x="1338" y="494" width="176" height="87" rx="3" />
				<rect x="1346" y="503" width="61" height="69.5" rx="10" />
				<path d="M1412.5 530Q1412.5 520 1422 520H1456Q1462 520 1466 513Q1470 504 1478 504H1497Q1507 504 1507 514V565Q1507 575.5 1497 575.5H1422Q1412.5 575.5 1412.5 565Z" />
				<rect x="1421.5" y="525" width="30.5" height="39.5" rx="10" />
				<circle cx="1376" cy="527" r="9.5" />
				<circle cx="1376" cy="527" r="5.5" />
				<circle cx="1437" cy="543" r="8" />
				<circle cx="1437" cy="543" r="5" />
				<circle cx="1413" cy="506" r="4" />
				<circle cx="1433" cy="506" r="3" />
				<circle cx="1453" cy="506" r="4" />
				<rect x="1471" y="523.5" width="26" height="4" rx="2" fill="#888" />
				<rect x="1464" y="537" width="33" height="4" rx="2" fill="#888" />
				<rect x="1464" y="550" width="33" height="4" rx="2" fill="#888" />
			</g>

			<rect x="1290" y="919" width="140" height="101" rx="3" fill="#fff" stroke="#333" strokeWidth="2" />
			<Burner cx={1321} cy={948} />
			<Burner cx={1399} cy={948} />
			<Burner cx={1321} cy={990} />
			<Burner cx={1399} cy={990} />
			<g fill="none" stroke="#333" strokeWidth="2">
				<circle cx="1359" cy="948" r="4.5" />
				<circle cx="1359" cy="990" r="4.5" />
			</g>

			<g fill="#000">
				<rect x="493" y="389" width="1379" height="21" />
				<rect x="493" y="389" width="20" height="198" />
				<rect x="689.5" y="389" width="20" height="193" />
				<rect x="1150.5" y="389" width="20" height="201" />
				<rect x="1850" y="389" width="22" height="663" />
				<rect x="1086" y="1031" width="786" height="21" />
				<rect x="496" y="1010" width="101" height="40" />
				<path d="M1870 1000L1988 1095V1158H1969V1103L1880 1035L1864 1004Z" />
			</g>
			<path d="M493 389L513 410M1872 389L1850 410M1872 1052L1850 1031M1150 410L1160 397L1170 410" fill="none" stroke="#666" strokeWidth="1" />

			<g stroke="#333" strokeWidth="3">
				{SOLID_LINES.map(([x1, y1, x2, y2, w], i) => (
					<line key={i} x1={x1} y1={y1} x2={x2} y2={y2} strokeWidth={w ?? 3} />
				))}
			</g>
			<g stroke="#333" strokeWidth="3" strokeDasharray="14 8">
				{DASHED_LINES.map(([x1, y1, x2, y2], i) => (
					<line key={i} x1={x1} y1={y1} x2={x2} y2={y2} />
				))}
			</g>

			<g stroke="#333" strokeWidth="2.4" fill="#333">
				<line x1="593" y1="789" x2="558" y2="754" />
				<path d="M554 750L566 755L559 762Z" strokeWidth="1" />
				<line x1="825" y1="888" x2="771" y2="940" />
				<path d="M767 944L772 932L779 939Z" strokeWidth="1" />
			</g>

			{CABINET_TEXT.map(([x, y, t], i) => (
				<text key={i} x={x} y={y}>
					{t}
				</text>
			))}
			<text x="1359" y="848" textDecoration="underline">
				COOKTOP
			</text>
			<text x="1359" y="872" textDecoration="underline">
				HOOD OVER
			</text>

			{DIM_LABELS.map(([x, y, t, v]) => (
				<DimLabel key={`${x}-${y}`} x={x} y={y} text={t} vertical={v} />
			))}

			<rect x="1086" y="372" width="44" height="13" fill="#fff" />
			<rect x="1107" y="386" width="6" height="18" fill="#fff" />
		</PlanSvg>
	);
}

/* ---------- floating AI tools ---------- */

const RedFrame = styled.div`
	position: absolute;
	right: 13px;
	bottom: 14px;
	width: 217px;
	height: 115px;
	display: flex;
	align-items: center;
	justify-content: center;
	border: 5px solid #ee1c25;
`;

const AiPill = styled.div`
	width: 177px;
	height: 80px;
	display: flex;
	align-items: center;
	border-radius: 40px;
	background: #fff;
	box-shadow: 0 6px 16px rgba(80, 80, 110, 0.14);
`;

const AiCell = styled.div`
	flex: 1;
	display: flex;
	justify-content: center;
`;

const AiDivider = styled.span`
	width: 1px;
	height: 48px;
	background: #ececec;
`;

function AiTools() {
	return (
		<RedFrame>
			<AiPill>
				<AiCell>
					<svg width="40" height="40" viewBox="0 0 40 40">
						<defs>
							<linearGradient id="aiGrad" x1="0" y1="0" x2="1" y2="0.6">
								<stop offset="0" stopColor="#9a4dff" />
								<stop offset="1" stopColor="#2f7bff" />
							</linearGradient>
						</defs>
						<path d="M8 11L13 6L32 27Q34 30 31 32Q28 34 26 31ZM11 14L15 9" fill="none" stroke="url(#aiGrad)" strokeWidth="3" strokeLinejoin="round" />
						<path d="M24 1L25.5 4L28 5L25.5 6L24 9L22.5 6L20 5L22.5 4Z" fill="#2f7bff" />
						<path d="M34 7L35.5 11L39 12L35.5 13L34 17L32.5 13L29 12L32.5 11Z" fill="#2f7bff" />
						<path d="M6 20L7.5 23L11 24L7.5 25L6 28L4.5 25L1 24L4.5 23Z" fill="#9a4dff" />
					</svg>
				</AiCell>
				<AiDivider />
				<AiCell>
					<svg width="40" height="40" viewBox="0 0 40 40">
						<defs>
							<linearGradient id="aiStar" x1="0" y1="0" x2="1" y2="1">
								<stop offset="0" stopColor="#8a4dff" />
								<stop offset="1" stopColor="#3d6dff" />
							</linearGradient>
						</defs>
						<path d="M16 9C18 17 20 20 30 22C20 24 18 28 16 38C14 28 11 24 1 22C11 20 14 17 16 9Z" fill="url(#aiStar)" />
						<path d="M31 2C32 6 33 7 38 8C33 9 32 10 31 14C30 10 29 9 25 8C29 7 30 6 31 2Z" fill="#2f7bff" />
					</svg>
				</AiCell>
			</AiPill>
		</RedFrame>
	);
}

/* ---------- scrollbars, palette ---------- */

const VTrack = styled.div`
	width: 25px;
	flex: none;
	background: #fff;
`;

const VThumb = styled.div`
	width: 20px;
	height: 623px;
	margin: 196px 0 0 3px;
	border-radius: 10px;
	background: #d1d2d4;
`;

const HTrack = styled.div`
	height: 25px;
	flex: none;
	padding: 3px 0 0 133px;
	background: #fff;
`;

const HThumb = styled.div`
	width: 2159px;
	height: 20px;
	border-radius: 10px;
	background: #d1d2d4;
`;

const PaletteRow = styled.div`
	height: 33px;
	flex: none;
	display: flex;
	align-items: center;
	gap: 1.43px;
	background: #fff;
	border-top: 1px solid #eeeeee;
	overflow: hidden;
`;

const PickerCell = styled.div`
	width: 67px;
	flex: none;
	display: flex;
	align-items: center;
	justify-content: flex-end;
	gap: 3px;
	padding-right: 3px;
`;

const Swatch = styled.span<{ $c: string }>`
	width: 24px;
	height: 30px;
	flex: none;
	border-radius: 2px;
	background: ${(p) => p.$c};
`;

const PALETTE = [
	"#b01020", "#cc1133", "#ec4565", "#f96a87", "#fb9db0",
	"#2a7f93", "#38a8c2", "#3fc0de", "#60d8f0", "#a8eeff",
	"#f5552a", "#ff7f3a", "#ff9a1a", "#ffb912", "#ffc65c",
	"#13957f", "#14b79a", "#1accb0", "#66d9c6", "#84eedc",
	"#9e2e62", "#c64e8a", "#e36ba6", "#f887c6", "#f3c0de",
	"#628417", "#78a22b", "#9abc26", "#b1d04a", "#d4e190",
	"#2024b0", "#3445db", "#6d47ef", "#9473f8", "#ae96f9",
	"#ffcb00", "#ffdc2e", "#f2e92a", "#faf545", "#fdfd88",
	"#9d51db", "#c355e8", "#d070fb", "#c08bff", "#dcacff",
	"#2e8048", "#3ea45c", "#52b07c", "#67c18c", "#90d9ad",
	"#eb3a2a", "#ff4a3d", "#ff6a6a", "#ff8080", "#ff9a90",
	"#2445a8", "#2f5ad0", "#3570f2", "#6a92fa", "#8ab0f4",
	"#7a3000", "#963c00", "#ab4526", "#d06040", "#e37858",
	"#168cd9", "#2ea0f5", "#47b2ff", "#3dcfff", "#6ae3ff",
	"#7a4f36", "#956043", "#b57350", "#d28860", "#f69d70",
	"#8c8275", "#b0a998", "#cfcbbb", "#e6dfd0", "#f4efdf",
	"#1a1a1a", "#333333", "#484848", "#5c5c5c", "#808080",
	"#bbbbbb", "#cccccc", "#d9d9d9", "#e6e6e6", "#f3f3f3",
	"#ffffff",
];

/* ---------- status bar ---------- */

const StatusBar = styled.div`
	height: 63px;
	flex: none;
	display: flex;
	align-items: center;
	padding-top: 1px;
	background: #f2f3f8;
	font-size: 23px;
	color: #2b2b2b;
`;

const StatusCell = styled.div<{ $w?: number; $pl?: number; $center?: boolean }>`
	width: ${(p) => (p.$w ? `${p.$w}px` : "auto")};
	flex: ${(p) => (p.$w ? "none" : "1")};
	height: 47px;
	display: flex;
	align-items: center;
	justify-content: ${(p) => (p.$center ? "center" : "flex-start")};
	padding-left: ${(p) => p.$pl ?? 0}px;
	border-right: 1px solid #e6e6ea;
	white-space: nowrap;
`;

const ShapeCount = styled.span`
	font-size: 22.6px;
	letter-spacing: -0.1px;
`;

const PageName = styled.span`
	flex: 1;
	letter-spacing: 0.3px;
`;

const PageCaret = styled.span`
	margin-right: 18px;
`;

const CurrentPage = styled.span`
	font-weight: 700;
	color: ${BLUE};
`;

const StatusGap = styled.span<{ $l: number; $r: number }>`
	margin: 0 ${(p) => p.$r}px 0 ${(p) => p.$l}px;
	display: flex;
	align-items: center;
`;

const StatusTail = styled.div`
	width: 161px;
	flex: none;
	height: 47px;
	display: flex;
	align-items: center;
	padding-left: 26px;
	gap: 31px;
`;

const ZoomTrack = styled.div`
	position: relative;
	width: 191px;
	height: 14px;
	flex: none;
	border-radius: 7px;
	background: linear-gradient(90deg, #484848 0 31px, #fff 31px);
`;

const ZoomThumb = styled.span`
	position: absolute;
	left: 24px;
	top: -5px;
	width: 24px;
	height: 24px;
	border-radius: 50%;
	background: #fff;
	border: 5px solid #484848;
`;

const TaskStrip = styled.div`
	height: 2px;
	flex: none;
	background: linear-gradient(90deg, #111 0 96px, #bbb 96px 672px, #111 672px 1361px, #555 1361px 1458px, #111 1458px);
`;

function Footer() {
	return (
		<StatusBar>
			<StatusCell $w={97} $pl={37}>
				<Icon name="pages" size={36} />
			</StatusCell>
			<StatusCell $w={256} $pl={32}>
				<PageName>Page-1</PageName>
				<PageCaret>
					<Caret />
				</PageCaret>
			</StatusCell>
			<StatusCell $w={82} $center>
				<svg width="26" height="26" viewBox="0 0 26 26" stroke="#333" strokeWidth="2">
					<path d="M13 1V25M1 13H25" />
				</svg>
			</StatusCell>
			<StatusCell $w={144} $center>
				<CurrentPage>Page-1</CurrentPage>
			</StatusCell>
			<StatusCell />
			<StatusCell $w={286} $pl={17}>
				<ShapeCount>Number of shapes: 53.5</ShapeCount>
			</StatusCell>
			<StatusCell $w={298} $pl={23}>
				<Icon name="layers" size={38} />
				<StatusGap $l={8} $r={31}>
					<Caret />
				</StatusGap>
				<Icon name="focus" size={32} />
				<StatusGap $l={14} $r={24}>
					Focus
				</StatusGap>
				<Icon name="play" size={34} />
			</StatusCell>
			<StatusCell $w={423} $pl={21}>
				<StatusGap $l={0} $r={20}>
					<svg width="24" height="4" viewBox="0 0 24 4">
						<rect width="22" height="3" fill="#333" />
					</svg>
				</StatusGap>
				<ZoomTrack>
					<ZoomThumb />
				</ZoomTrack>
				<StatusGap $l={21} $r={28}>
					<svg width="28" height="28" viewBox="0 0 28 28" stroke="#333" strokeWidth="2">
						<path d="M14 2V26M2 14H26" />
					</svg>
				</StatusGap>
				<StatusGap $l={0} $r={14}>
					64%
				</StatusGap>
				<Caret />
			</StatusCell>
			<StatusTail>
				<Icon name="fit" size={32} />
				<Icon name="fitWidth" size={32} />
			</StatusTail>
		</StatusBar>
	);
}

export default function App() {
	return (
		<AppFrame>
			<GlobalStyle />
			<TopBar />
			<NavRow />
			<Ribbon />
			<MainArea>
				<LeftSidebar />
				<Workspace>
					<TopRuler />
					<CanvasRow>
						<LeftRuler />
						<Canvas>
							<PageSheet>
								<GridPaper />
								<FloorPlan />
							</PageSheet>
							<AiTools />
						</Canvas>
						<VTrack>
							<VThumb />
						</VTrack>
					</CanvasRow>
					<HTrack>
						<HThumb />
					</HTrack>
					<PaletteRow>
						<PickerCell>
							<svg width="30" height="30" viewBox="0 0 30 30" fill="none" stroke="#3c3c3c" strokeWidth="3" strokeLinejoin="round">
								<path d="M2 15L13 7L25 15L13 27Z" />
								<path d="M5 16H22L13 26Z" fill="#3c3c3c" />
								<path d="M8 2L25 13" />
								<circle cx="27" cy="24" r="2" fill="#3c3c3c" stroke="none" />
							</svg>
							<Caret />
						</PickerCell>
						{PALETTE.map((c, i) => (
							<Swatch key={i} $c={c} />
						))}
					</PaletteRow>
				</Workspace>
				<RightSidebar />
			</MainArea>
			<Footer />
			<TaskStrip />
		</AppFrame>
	);
}
